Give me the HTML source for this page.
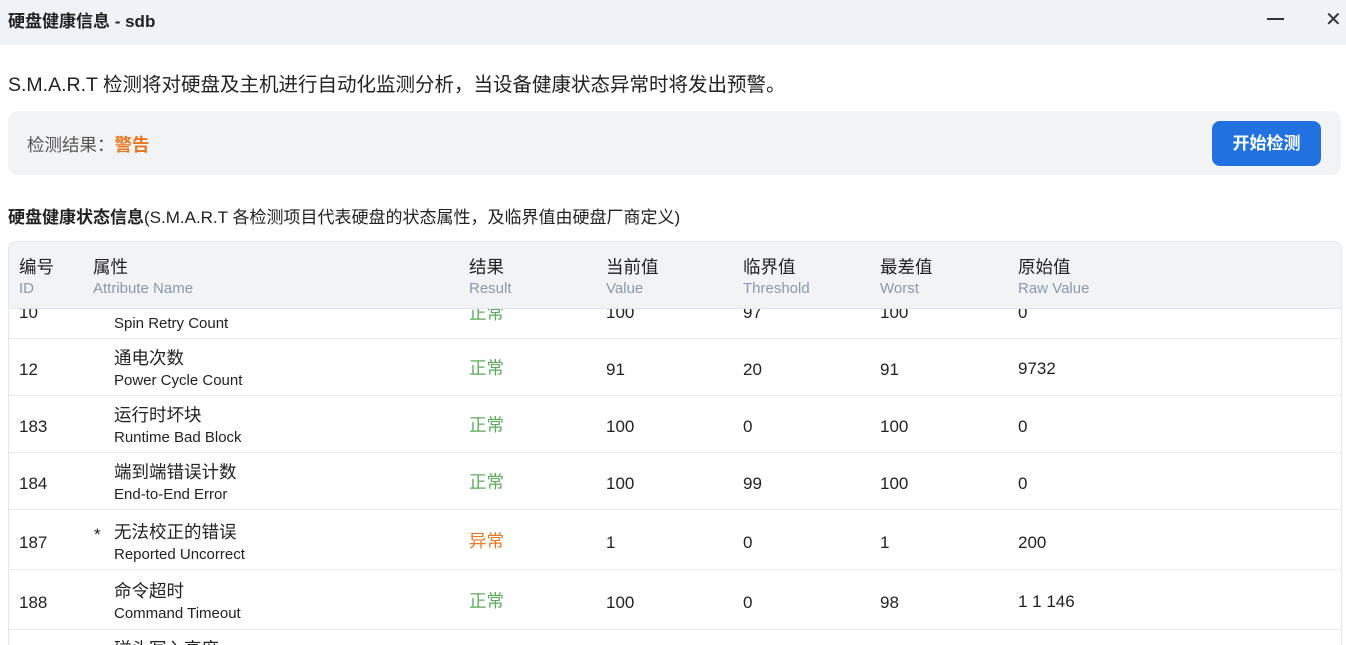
<!DOCTYPE html><html><head><meta charset="utf-8"><style>
*{margin:0;padding:0;box-sizing:border-box}
html{width:1346px;height:645px;overflow:hidden}
body{width:1346px;height:645px;overflow:hidden;background:#fff;font-family:"Liberation Sans","Noto Sans CJK SC",sans-serif;color:#222;position:relative}
.abs{position:absolute;white-space:nowrap}
.title{left:0;top:0;width:1346px;height:45px;background:#eff2f7}
.card{left:8px;top:111px;width:1333px;height:64px;background:#f2f3f5;border-radius:10px}
.btn{left:1212px;top:121px;width:109px;height:45px;background:#2172e0;border-radius:8px;color:#fff;font-weight:bold;font-size:17px;text-align:center;line-height:45px}
.tbl{left:8px;top:241px;width:1334px;height:412px;border:1px solid #e3e7ee;border-radius:8px;overflow:hidden}
.head{position:absolute;left:0;top:0;width:100%;height:67px;background:#f2f3f5;border-bottom:1px solid #dfe5ee}
.body{position:absolute;left:0;top:67px;width:100%;height:400px;overflow:hidden}
.row{position:absolute;left:0;width:100%;border-bottom:1px solid #e6ebf2;font-size:17px}
.hz{font-size:17.5px;color:#222}
.he{font-size:15px;color:#8a99b0}
.g{color:#5aac5a}.o{color:#e87722}
.cn{font-size:17.5px}.en{font-size:15px}
</style></head><body>
<div class="abs title"></div>
<div class="abs" style="left:8px;top:7px;font-size:17px;font-weight:bold">硬盘健康信息 - sdb</div>
<div class="abs" style="left:1267px;top:18px;width:17px;height:2px;background:#333"></div>
<div class="abs" style="left:1325px;top:7px;font-size:20px;color:#333">✕</div>
<div class="abs" style="left:8px;top:68px;font-size:19.5px">S.M.A.R.T 检测将对硬盘及主机进行自动化监测分析，当设备健康状态异常时将发出预警。</div>
<div class="abs card"></div>
<div class="abs" style="left:27px;top:132px;font-size:17.5px;color:#555">检测结果：<b style="color:#e87722">警告</b></div>
<div class="abs btn">开始检测</div>
<div class="abs" style="left:8px;top:203px;font-size:17px"><b>硬盘健康状态信息</b>(S.M.A.R.T 各检测项目代表硬盘的状态属性，及临界值由硬盘厂商定义)</div>
<div class="abs tbl">
<div class="head">
<div class="abs hz" style="left:10px;top:12px">编号</div><div class="abs he" style="left:10px;top:38px">ID</div>
<div class="abs hz" style="left:84px;top:12px">属性</div><div class="abs he" style="left:84px;top:38px">Attribute Name</div>
<div class="abs hz" style="left:460px;top:12px">结果</div><div class="abs he" style="left:460px;top:38px">Result</div>
<div class="abs hz" style="left:597px;top:12px">当前值</div><div class="abs he" style="left:597px;top:38px">Value</div>
<div class="abs hz" style="left:734px;top:12px">临界值</div><div class="abs he" style="left:734px;top:38px">Threshold</div>
<div class="abs hz" style="left:871px;top:12px">最差值</div><div class="abs he" style="left:871px;top:38px">Worst</div>
<div class="abs hz" style="left:1009px;top:12px">原始值</div><div class="abs he" style="left:1009px;top:38px">Raw Value</div>
</div>
<div class="body">
<div class="row" style="top:-27px;height:57px"><div class="abs" style="left:10px;top:21px">10</div><div class="abs cn" style="left:105px;top:3px">主轴重试</div><div class="abs en" style="left:105px;top:33px">Spin Retry Count</div><div class="abs g cn" style="left:460px;top:18px">正常</div><div class="abs" style="left:597px;top:21px">100</div><div class="abs" style="left:734px;top:21px">97</div><div class="abs" style="left:871px;top:21px">100</div><div class="abs" style="left:1009px;top:21px">0</div></div>
<div class="row" style="top:30px;height:57px"><div class="abs" style="left:10px;top:21px">12</div><div class="abs cn" style="left:105px;top:6px">通电次数</div><div class="abs en" style="left:105px;top:33px">Power Cycle Count</div><div class="abs g cn" style="left:460px;top:16px">正常</div><div class="abs" style="left:597px;top:21px">91</div><div class="abs" style="left:734px;top:21px">20</div><div class="abs" style="left:871px;top:21px">91</div><div class="abs" style="left:1009px;top:20px">9732</div></div>
<div class="row" style="top:87px;height:57px"><div class="abs" style="left:10px;top:21px">183</div><div class="abs cn" style="left:105px;top:6px">运行时坏块</div><div class="abs en" style="left:105px;top:33px">Runtime Bad Block</div><div class="abs g cn" style="left:460px;top:16px">正常</div><div class="abs" style="left:597px;top:21px">100</div><div class="abs" style="left:734px;top:21px">0</div><div class="abs" style="left:871px;top:21px">100</div><div class="abs" style="left:1009px;top:21px">0</div></div>
<div class="row" style="top:144px;height:57px"><div class="abs" style="left:10px;top:21px">184</div><div class="abs cn" style="left:105px;top:6px">端到端错误计数</div><div class="abs en" style="left:105px;top:33px">End-to-End Error</div><div class="abs g cn" style="left:460px;top:16px">正常</div><div class="abs" style="left:597px;top:21px">100</div><div class="abs" style="left:734px;top:21px">99</div><div class="abs" style="left:871px;top:21px">100</div><div class="abs" style="left:1009px;top:21px">0</div></div>
<div class="row" style="top:201px;height:60px"><div class="abs" style="left:10px;top:23px">187</div><div class="abs" style="left:85px;top:15px">*</div><div class="abs cn" style="left:105px;top:9px">无法校正的错误</div><div class="abs en" style="left:105px;top:36px">Reported Uncorrect</div><div class="abs o cn" style="left:460px;top:18px">异常</div><div class="abs" style="left:597px;top:23px">1</div><div class="abs" style="left:734px;top:23px">0</div><div class="abs" style="left:871px;top:23px">1</div><div class="abs" style="left:1009px;top:23px">200</div></div>
<div class="row" style="top:261px;height:60px"><div class="abs" style="left:10px;top:23px">188</div><div class="abs cn" style="left:105px;top:8px">命令超时</div><div class="abs en" style="left:105px;top:35px">Command Timeout</div><div class="abs g cn" style="left:460px;top:18px">正常</div><div class="abs" style="left:597px;top:23px">100</div><div class="abs" style="left:734px;top:23px">0</div><div class="abs" style="left:871px;top:23px">98</div><div class="abs" style="left:1009px;top:22px">1 1 146</div></div>
<div class="row" style="top:321px;height:57px"><div class="abs cn" style="left:105px;top:6px">磁头写入高度</div></div>
</div></div>
</body></html>
